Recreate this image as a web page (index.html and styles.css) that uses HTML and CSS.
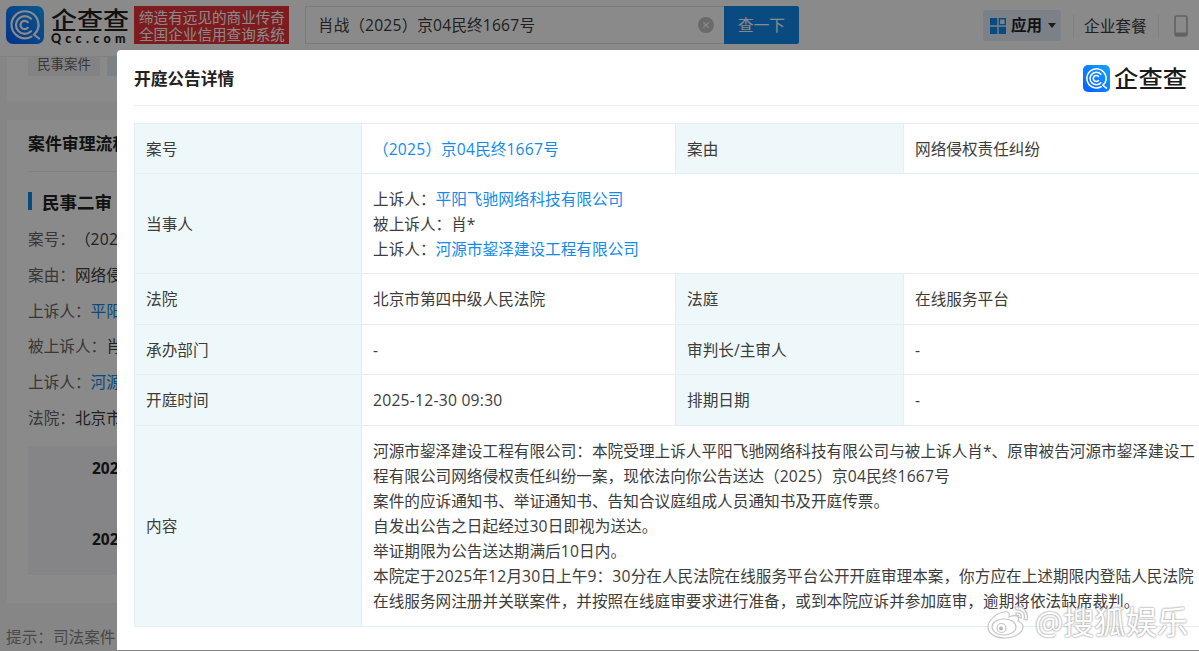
FILE: index.html
```
<!DOCTYPE html>
<html lang="zh-CN">
<head>
    <meta charset="utf-8">
    <title>开庭公告详情 - 企查查</title>
    <link rel="stylesheet" href="styles.css">
</head>
<body>
    <!-- logo mark, used in the header and in the dialog -->
    <svg width="0" height="0" class="defs">
        <defs>
            <linearGradient id="blue" x1="0" y1="1" x2="1" y2="0">
                <stop offset="0" stop-color="#0a5cff"/>
                <stop offset="1" stop-color="#12a5ff"/>
            </linearGradient>
            <symbol id="mark" viewBox="0 0 38 38">
                <rect width="38" height="38" rx="7" fill="url(#blue)"/>
                <g fill="none" stroke="#fff" stroke-width="2.2" stroke-linecap="round">
                    <path d="M25.500 30.600A13.500 13.500 0 1 1 30.700 25.500L28 28.500L33 32.500"/>
                    <path d="M25 25.200A8.800 8.800 0 1 1 25 12.800"/>
                    <path d="M21.800 21.800A4.200 4.200 0 1 1 21.800 16.200"/>
                </g>
            </symbol>
        </defs>
    </svg>

    <div class="header">
        <svg class="mark"><use href="#mark"/></svg>
        <div class="brand">
            <div class="brand-cn">企查查</div>
            <div class="brand-en">Qcc.com</div>
        </div>
        <div class="slogan">缔造有远见的商业传奇<br>全国企业信用查询系统</div>
        <div class="search">
            <span>肖战（<i>2025</i>）京<i>04</i>民终<i>1667</i>号</span>
            <svg width="16" height="16" viewBox="0 0 16 16">
                <circle cx="8" cy="8" r="8" fill="#c4c4c4"/>
                <path d="M5.3 5.3l5.4 5.4M10.7 5.3l-5.4 5.4" stroke="#fff" stroke-width="1.2"/>
            </svg>
        </div>
        <div class="search-btn">查一下</div>
        <div class="apps">
            <svg width="16" height="16" viewBox="0 0 16 16">
                <path d="M0 0h7.3v7.3H0zM0 8.7h7.3V16H0zM8.7 8.7H16V16H8.7z" fill="#128bed"/>
                <path d="M9.4 .7h5.9v5.9H9.4z" fill="none" stroke="#128bed" stroke-width="1.4"/>
            </svg>
            <b>应用</b>
            <span class="caret"></span>
        </div>
        <div class="plan">企业套餐</div>
        <svg class="phone" width="14" height="22" viewBox="0 0 14 22">
            <rect x="1" y="1" width="12" height="20" rx="2" fill="none" stroke="#b5b5b5" stroke-width="1.6"/>
            <path d="M1 17.5h12v2.5q0 1-1 1H2q-1 0-1-1z" fill="#b5b5b5"/>
        </svg>
    </div>

    <div class="page">
        <div class="card tabs">
            <span class="tab">民事案件</span>
            <span class="tab on"></span>
        </div>
        <div class="card flow">
            <h2>案件审理流程</h2>
            <h3>民事二审</h3>
            <p><label>案号：</label>（<i>2025</i></p>
            <p><label>案由：</label>网络侵权</p>
            <p><label>上诉人：</label><a>平阳</a></p>
            <p><label>被上诉人：</label>肖*</p>
            <p><label>上诉人：</label><a>河源</a></p>
            <p><label>法院：</label>北京市</p>
            <div class="dates">
                <b>2025</b>
                <b>2025</b>
            </div>
        </div>
        <div class="tip">提示：司法案件</div>
    </div>

    <div class="mask"></div>

    <div class="modal">
        <div class="modal-head">
            <h1>开庭公告详情</h1>
            <div class="modal-logo">
                <svg class="mark"><use href="#mark"/></svg>
                <span>企查查</span>
            </div>
        </div>
        <div class="detail">
            <div class="th">案号</div>
            <div class="td"><a>（<i>2025</i>）京<i>04</i>民终<i>1667</i>号</a></div>
            <div class="th">案由</div>
            <div class="td">网络侵权责任纠纷</div>

            <div class="th">当事人</div>
            <div class="td wide">
                <div>上诉人：<a>平阳飞驰网络科技有限公司</a></div>
                <div>被上诉人：肖*</div>
                <div>上诉人：<a>河源市鋆泽建设工程有限公司</a></div>
            </div>

            <div class="th">法院</div>
            <div class="td">北京市第四中级人民法院</div>
            <div class="th">法庭</div>
            <div class="td">在线服务平台</div>

            <div class="th">承办部门</div>
            <div class="td">-</div>
            <div class="th">审判长/主审人</div>
            <div class="td">-</div>

            <div class="th">开庭时间</div>
            <div class="td"><i>2025-12-30 09:30</i></div>
            <div class="th">排期日期</div>
            <div class="td">-</div>

            <div class="th">内容</div>
            <div class="td wide">
                <div>河源市鋆泽建设工程有限公司：本院受理上诉人平阳飞驰网络科技有限公司与被上诉人肖*、原审被告河源市鋆泽建设工<br>程有限公司网络侵权责任纠纷一案，现依法向你公告送达（<i>2025</i>）京<i>04</i>民终<i>1667</i>号</div>
                <div>案件的应诉通知书、举证通知书、告知合议庭组成人员通知书及开庭传票。</div>
                <div>自发出公告之日起经过<i>30</i>日即视为送达。</div>
                <div>举证期限为公告送达期满后<i>10</i>日内。</div>
                <div>本院定于<i>2025</i>年<i>12</i>月<i>30</i>日上午<i>9</i>：<i>30</i>分在人民法院在线服务平台公开开庭审理本案，你方应在上述期限内登陆人民法院<br>在线服务网注册并关联案件，并按照在线庭审要求进行准备，或到本院应诉并参加庭审，逾期将依法缺席裁判。</div>
            </div>
        </div>
    </div>

    <div class="watermark">
        <svg width="42" height="34" viewBox="0 0 42 34">
            <g fill="#fff" stroke="#bdbdbd" stroke-width="1.2">
                <path d="M17 7C9 8 1 16 1 22c0 7 8 11 17 11s18-5 18-11c0-4-3-5-5-6 2-5-2-7-9-4 1-4-1-6-5-5z"/>
                <ellipse cx="17" cy="22" rx="12" ry="8"/>
                <circle cx="14.500" cy="23" r="4.500"/>
                <path d="M28 2c8-2 14 5 12 13l-3-1c2-6-3-10-8-9z"/>
                <path d="M29 8c4-1 6 2 5 5l-2-.5c0-2-1-2.500-3-2z"/>
            </g>
            <circle cx="14" cy="23.500" r="2" fill="#aaa"/>
        </svg>
        <span>@搜狐娱乐</span>
    </div>
</body>
</html>
```
FILE: styles.css
```
* {
    box-sizing: border-box;
}
body {
    position: relative;
    width: 1199px;
    height: 651px;
    margin: 0;
    overflow: hidden;
    background: #f7f7f7;
    color: #3c3c3c;
    font-family: "Open Sans", "Noto Sans CJK SC", sans-serif;
    font-size: 15.65px;
    line-height: 25px;
    text-spacing-trim: space-all;
    white-space: nowrap;
}
h1, h2, h3, p {
    margin: 0;
}
h1, h2, h3, b {
    color: #222;
}
a {
    color: #128bed;
}
/* numbers */
i {
    font-style: normal;
    letter-spacing: .25px;
}
.defs {
    position: absolute;
}

/* header */
.header {
    display: flex;
    align-items: flex-start;
    height: 57px;
    padding: 6px 0 0 6px;
    background: #fff;
    border-bottom: 1px solid #eee;
}
.header .mark {
    width: 38px;
    height: 38px;
}
.brand {
    width: 84px;
    padding-left: 7px;
    color: #222;
}
.brand-cn {
    height: 27px;
    font-size: 26px;
    font-weight: 500;
    line-height: 28px;
    transform: scaleY(.93);
}
.brand-en {
    font-family: Lato, sans-serif;
    font-size: 12.500px;
    font-weight: 900;
    letter-spacing: 4.300px;
    line-height: 12px;
}
.slogan {
    width: 155px;
    height: 38px;
    margin-left: 6px;
    padding: 3px 0 0 5px;
    background: #e8323a;
    color: #fff;
    font-size: 14.6px;
    line-height: 16.500px;
}
.search {
    display: flex;
    align-items: center;
    justify-content: space-between;
    width: 419px;
    height: 38px;
    margin-left: 16px;
    padding: 0 10px 0 12px;
    border: 1px solid #e4e4e4;
    border-right: 0;
}
.search-btn {
    width: 75px;
    height: 38px;
    border-radius: 0 2px 2px 0;
    background: #128bed;
    color: #fff;
    line-height: 39px;
    text-align: center;
}
.apps {
    display: flex;
    align-items: center;
    gap: 5px;
    width: 78px;
    height: 31px;
    margin: 4px 0 0 184px;
    padding-left: 7px;
    border-radius: 3px;
    background: #e5effa;
    font-size: 15.500px;
}
.caret {
    margin-left: 1px;
    border: 4px solid transparent;
    border-top: 5px solid #333;
    border-bottom: 0;
}
.plan {
    height: 24px;
    margin: 8px 0 0 12px;
    padding: 0 11px 0 10px;
    border: 1px solid #eee;
    border-width: 0 1px;
    line-height: 24px;
}
.phone {
    margin: 9px 0 0 15px;
}

/* page under the dialog */
.page {
    padding-left: 7px;
}
.card {
    background: #fff;
}
.tabs {
    display: flex;
    gap: 7px;
    height: 44px;
    padding-left: 21px;
}
.tab {
    width: 72px;
    height: 19px;
    background: #f3f3f5;
    color: #666;
    font-size: 13.400px;
    line-height: 15px;
    text-align: center;
}
.tab.on {
    background: #e5effa;
}
.flow {
    height: 483px;
    margin-top: 19px;
    padding-left: 21px;
}
.flow h2 {
    height: 52px;
    margin-bottom: 17px;
    border-bottom: 1px solid #eee;
    font-size: 16.900px;
    line-height: 48px;
}
.flow h3 {
    height: 33px;
    padding-left: 14px;
    background: linear-gradient(#128bed, #128bed) 0 3px / 4px 18px no-repeat;
    font-size: 17.500px;
    line-height: 26px;
}
.flow p {
    height: 35.800px;
    line-height: 34px;
}
.flow label {
    color: #666;
}
.dates {
    display: flex;
    flex-direction: column;
    gap: 46px;
    height: 129px;
    margin-top: 9px;
    padding: 10px 0 0 64px;
    background: #f5f6fc;
    font-size: 15.500px;
}
.tip {
    margin: 22px 0 0 -1px;
    color: #888;
}

.mask {
    position: absolute;
    inset: 0;
    background: rgba(0, 0, 0, .46);
}

/* dialog */
.modal {
    position: absolute;
    top: 50px;
    left: 117px;
    width: 1082px;
    height: 600px;
    padding-left: 17px;
    overflow: hidden;
    border-radius: 4px 0 0 0;
    background: #fff;
}
.modal-head {
    display: flex;
    align-items: center;
    justify-content: space-between;
    height: 56px;
    margin-bottom: 17px;
    padding: 2px 12px 0 0;
    border-bottom: 1px solid #eee;
}
.modal-head h1 {
    font-size: 16.700px;
}
.modal-logo {
    display: flex;
    align-items: center;
    gap: 4px;
    color: #1a1a1a;
    font-size: 24.300px;
    font-weight: 500;
}
.modal-logo span {
    transform: scaleY(.94);
}
.modal-logo .mark {
    width: 27px;
    height: 27px;
}
.detail {
    display: grid;
    grid-template-columns: 227px 314px 228px 300px;
    grid-template-rows: 50px 100px 51px 50px 51px 201px;
    border-top: 1px solid #e4eef6;
    border-left: 1px solid #e4eef6;
}
.th, .td {
    display: flex;
    flex-direction: column;
    justify-content: center;
    padding: 1px 0 0 11px;
    border-right: 1px solid #e4eef6;
    border-bottom: 1px solid #e4eef6;
}
.th {
    background: #eef8fa;
}
.wide {
    grid-column: 2 / 5;
}

.watermark {
    position: absolute;
    top: 603px;
    left: 987px;
    display: flex;
    align-items: center;
    gap: 6px;
    opacity: .85;
    color: #fff;
    font-size: 31.300px;
    line-height: 38px;
    text-shadow: 0 0 2px #888, 0 0 2px #999;
}
```
